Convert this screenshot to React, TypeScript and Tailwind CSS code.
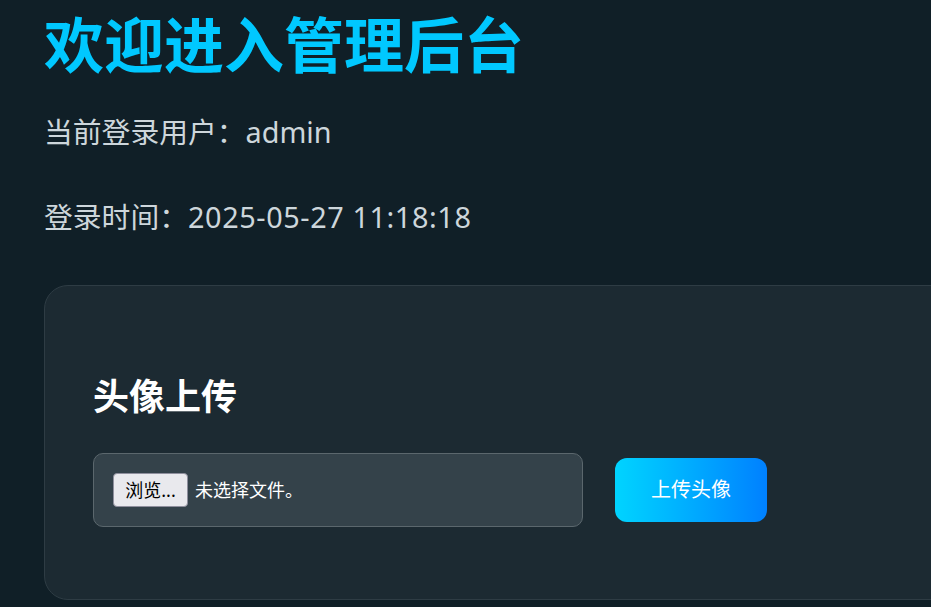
export default function App() {
  return (
    <div
      className="h-[607px] overflow-hidden bg-[#101f27] px-[44px]"
      style={{ fontFamily: '"Noto Sans", "Noto Sans CJK SC", sans-serif' }}
    >
      <h1 className="mt-[15px] text-[60px] leading-[60px] font-bold text-[#00c8ff] whitespace-nowrap">
        欢迎进入管理后台
      </h1>
      <p className="mt-[37px] text-[28.8px] leading-[40px] text-[#cdd6db] whitespace-nowrap">
        当前登录用户：admin
      </p>
      <p className="mt-[45px] text-[28.8px] leading-[40px] text-[#cdd6db] whitespace-nowrap">
        登录时间：<span className="tracking-[0.6px]">2025-05-27 11:18:18</span>
      </p>

      <div className="mt-[48px] w-[1000px] shrink-0 rounded-[24px] border border-[#2e3c44] bg-[#1c2a32] pl-[48px] pt-[89px] pb-[72px]">
        <h2 className="text-[36px] leading-[44px] font-bold text-white">头像上传</h2>
        <div className="mt-[34px] flex items-center gap-8">
          <label className="flex h-[74px] w-[490px] items-center gap-[7px] rounded-[10px] border border-[#5b676d] bg-[#34424a] px-[19px]">
            <span className="flex h-[34px] w-[75px] items-center justify-center rounded-[4px] border border-[#8f8f9d] bg-[#e9e9ed] text-[18px] text-black">
              浏览...
            </span>
            <span className="text-[18px] text-white">未选择文件。</span>
          </label>
          <button className="h-[64px] w-[152px] rounded-[12px] bg-gradient-to-r from-[#00d4ff] to-[#0080ff] text-[20px] text-white">
            上传头像
          </button>
        </div>
      </div>
    </div>
  )
}
